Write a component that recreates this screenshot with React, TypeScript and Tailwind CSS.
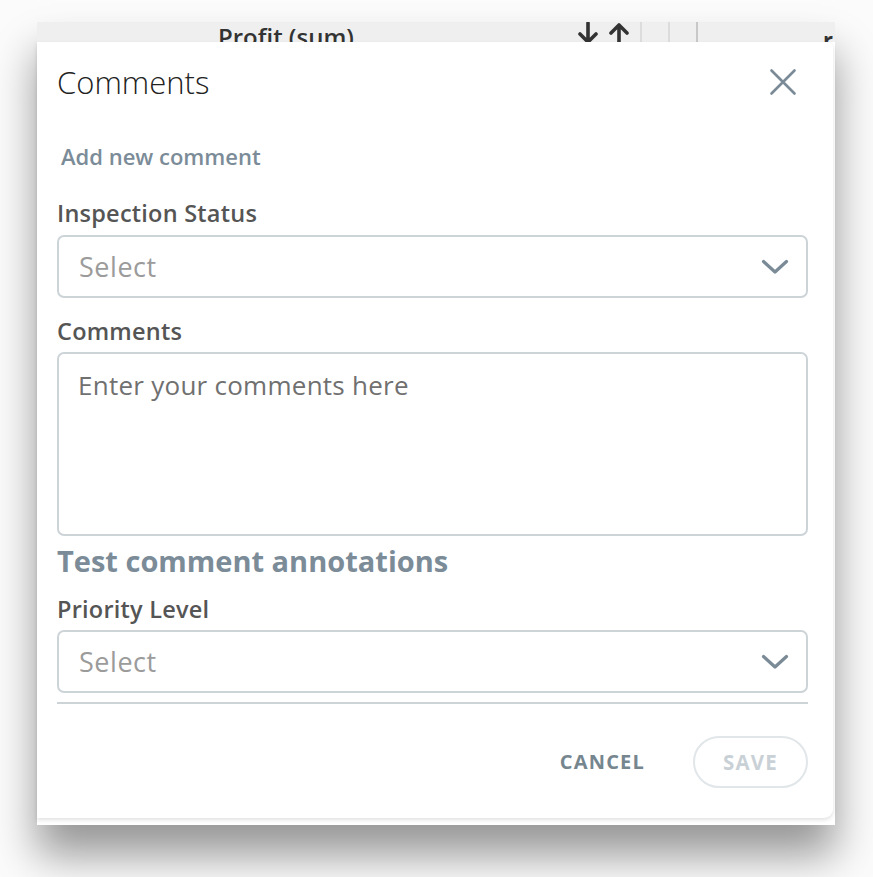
import React from "react";

const font = { fontFamily: '"Open Sans", "Noto Sans", sans-serif' };

function Chevron() {
  return (
    <svg width="28" height="16" viewBox="0 0 28 16" fill="none" className="shrink-0">
      <path d="M2.5 2.5 L14 13 L25.5 2.5" stroke="#7a8b97" strokeWidth="3.2" strokeLinecap="round" strokeLinejoin="round" />
    </svg>
  );
}

function SelectBox() {
  return (
    <div className="flex h-[63px] items-center justify-between rounded-[7px] border-2 border-[#cdd4d8] bg-white pl-[20px] pr-[17px]">
      <span className="text-[27px] tracking-[0.02em] leading-none text-[#9b9b9b]">Select</span>
      <Chevron />
    </div>
  );
}

export default function App() {
  return (
    <div className="min-h-[877px] w-[873px] bg-[#fbfbfb] pt-[22px] pl-[37px]" style={font}>
      <div className="relative h-[803px] w-[798px] bg-white shadow-[0_30px_40px_rgba(0,0,0,0.4)]">
        {/* background table header */}
        <div className="flex h-[20px] items-start overflow-hidden bg-[#efefef]">
          <div className="w-[181px]" />
          <span className="mt-[3px] text-[24px] font-semibold leading-none text-[#333]">Profit (sum)</span>
          <div className="w-[223px]" />
          <svg width="56" height="20" viewBox="0 0 56 20" fill="none" className="shrink-0">
            <path d="M11 1 V20 M3 12 L11 20 L19 12" stroke="#333" strokeWidth="3.6" strokeLinecap="round" strokeLinejoin="round" />
            <path d="M42 3 V24 M34 11 L42 3 L50 11" stroke="#333" strokeWidth="3.6" strokeLinecap="round" strokeLinejoin="round" />
          </svg>
          <div className="ml-[7px] h-full w-[2px] bg-[#dcdcdc]" />
          <div className="ml-[26px] h-full w-[2px] bg-[#dcdcdc]" />
          <div className="ml-[26px] h-full w-[2px] bg-[#c8c8c8]" />
          <div className="flex-1" />
          <span className="mr-[2px] mt-[6px] text-[22px] font-bold leading-none text-[#333]">r</span>
        </div>

        {/* modal */}
        <div className="absolute left-0 top-[20px] flex h-[776px] w-[796px] flex-col rounded-tr-[6px] rounded-br-[9px] bg-white pl-[20px] pr-[25px] shadow-[0_2px_4px_rgba(0,0,0,0.12)]">
          <div className="flex h-[80px] items-center justify-between">
            <span className="text-[31px] font-light leading-none text-[#222]">Comments</span>
            <svg width="28" height="28" viewBox="0 0 28 28" fill="none" className="mr-[11px]">
              <path d="M2.5 2.5 L25.5 25.5 M25.5 2.5 L2.5 25.5" stroke="#7a8b97" strokeWidth="2.6" strokeLinecap="round" />
            </svg>
          </div>

          <div className="mt-[22px] ml-[4px] text-[22px] font-semibold leading-[24px] text-[#7b8c98]">Add new comment</div>

          <div className="mt-[33px] text-[23.5px] font-semibold tracking-[0.01em] leading-[24px] text-[#555]">Inspection Status</div>
          <div className="mt-[10px]">
            <SelectBox />
          </div>

          <div className="mt-[21px] text-[23.5px] font-semibold tracking-[0.01em] leading-[24px] text-[#555]">Comments</div>
          <div className="mt-[9px] h-[184px] rounded-[7px] border-2 border-[#cdd4d8] bg-white px-[19px] pt-[18px]">
            <span className="text-[26px] tracking-[0.01em] leading-none text-[#707070]">Enter your comments here</span>
          </div>

          <div className="mt-[8px] text-[29px] font-bold leading-[34px] text-[#7b8c98]">Test comment annotations</div>

          <div className="mt-[19px] text-[23.5px] font-semibold tracking-[0.01em] leading-[24px] text-[#555]">Priority Level</div>
          <div className="mt-[9px]">
            <SelectBox />
          </div>

          <div className="mt-[9px] h-[2px] bg-[#cdd4d8]" />

          <div className="mt-[32px] flex items-center justify-end gap-[48px]">
            <span className="text-[20px] font-bold tracking-[0.06em] leading-none text-[#76868f]">CANCEL</span>
            <div className="flex h-[52px] w-[115px] items-center justify-center rounded-full border-2 border-[#e1e6e9]">
              <span className="text-[20.5px] font-bold tracking-[0.06em] leading-none text-[#c9d1d6]">SAVE</span>
            </div>
          </div>
        </div>
      </div>
    </div>
  );
}
